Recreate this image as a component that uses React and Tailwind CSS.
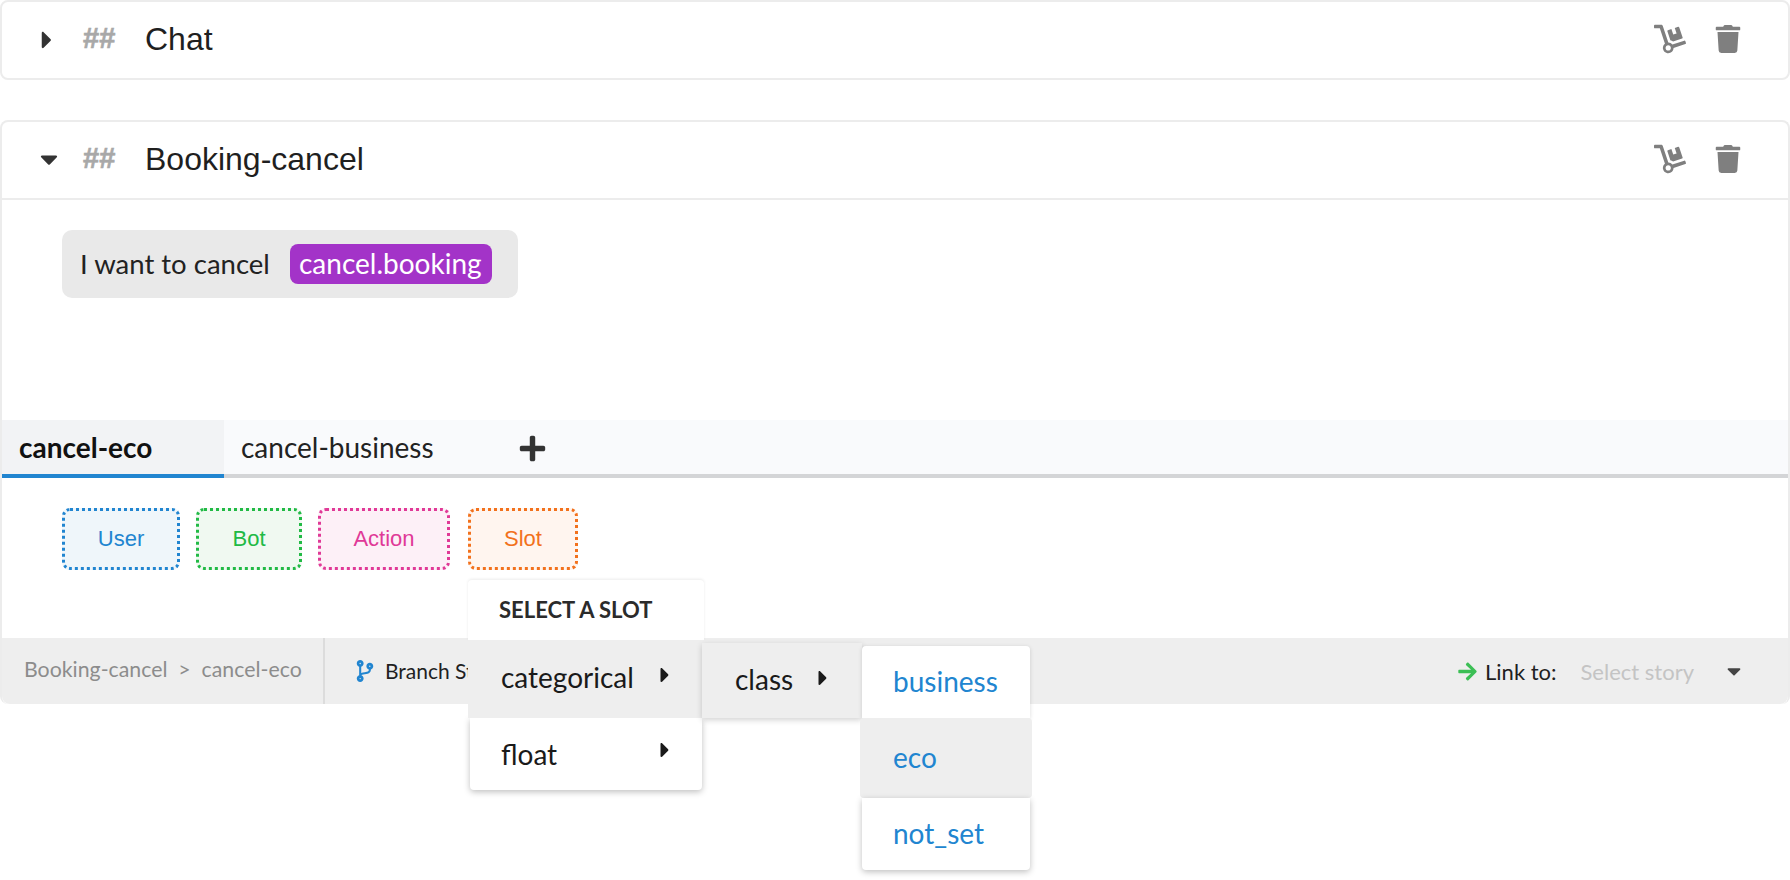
import { FaCaretDown, FaCaretRight, FaCodeBranch, FaDolly, FaTrash, FaPlus, FaArrowRight } from 'react-icons/fa'

function StoryHeader({ title, open, className = '' }) {
  return (
    <div className={`flex items-center h-[76px] pr-[46px] ${className}`}>
      <div className="w-[81px] pl-[31px] flex items-center">
        {open ? (
          <FaCaretDown size={28} className="ml-[2px] mb-[2px] text-[#333333]" />
        ) : (
          <FaCaretRight size={28} className="mb-[1px] text-[#333333]" />
        )}
      </div>
      <span className="w-[62px] pb-[2px] font-['Liberation_Sans'] font-bold text-[29px] text-[#a8a8a8] [-webkit-text-stroke:0.6px_#a8a8a8]">##</span>
      <span className="flex-1 pb-[2px] font-['Liberation_Sans'] text-[32px] text-[#1f1f1f]">{title}</span>
      <FaDolly size={32} className="text-[#7f7f7f] mr-[28px] mb-[2px]" />
      <FaTrash size={28} className="text-[#7f7f7f] mb-[3px]" />
    </div>
  )
}

function AddButton({ label, className }) {
  return (
    <div className={`h-[62px] pb-[2px] flex items-center justify-center rounded-lg border-[3px] border-dotted font-['Liberation_Sans'] text-[22px] ${className}`}>
      {label}
    </div>
  )
}

function SlotMenu() {
  return (
    <div className="absolute left-0 top-[72px] w-[236px] z-10 font-['Lato'] text-[28px] text-[#1a1a1a]">
      <div className="h-[60px] bg-white rounded-t pl-[31px] pt-[13px] font-bold text-[22px] text-[#2b2b2b] shadow-[0_-1px_3px_rgba(0,0,0,0.08)]">SELECT A SLOT</div>
      <div className="relative h-[78px] bg-[#eeeeee] flex items-center pl-[33px]">
        <span className="w-[152px] pb-[4px]">categorical</span>
        <FaCaretRight size={24} className="mb-[8px] text-[#1a1a1a]" />
        <div className="absolute left-[234px] top-[3px] w-[160px] h-[75px] bg-[#eeeeee] flex items-center pl-[33px] shadow-[0_2px_6px_rgba(0,0,0,0.18)]">
          <span className="w-[76px] pb-[4px]">class</span>
          <FaCaretRight size={24} className="mb-[6px] text-[#1a1a1a]" />
        </div>
        <div className="absolute left-[392px] top-[6px] w-[172px] text-[#2185d0]">
          <div className="h-[72px] pb-[2px] mx-[2px] bg-white rounded-t flex items-center pl-[31px] shadow-[0_1px_4px_rgba(0,0,0,0.15)]">business</div>
          <div className="h-[80px] pb-[2px] bg-[#eeeeee] rounded flex items-center pl-[33px]">eco</div>
          <div className="h-[72px] pb-[2px] mx-[2px] bg-white rounded-b flex items-center pl-[31px] shadow-[0_2px_6px_rgba(0,0,0,0.25)]">not_set</div>
        </div>
      </div>
      <div className="h-[72px] mx-[2px] bg-white rounded-b flex items-center pl-[31px] shadow-[0_2px_6px_rgba(0,0,0,0.25)]">
        <span className="w-[152px]">float</span>
        <FaCaretRight size={24} className="mb-[8px] text-[#1a1a1a]" />
      </div>
    </div>
  )
}

export default function App() {
  return (
    <div className="min-h-[880px] bg-white font-['Lato']">
      <div className="h-[80px] border-2 border-[#ececec] rounded-lg">
        <StoryHeader title="Chat" />
      </div>
      <div className="mt-[40px] h-[584px] border-2 border-b-0 border-[#ececec] rounded-lg flex flex-col">
        <StoryHeader title="Booking-cancel" open className="h-[78px] border-b-2 border-[#ececec]" />
        <div className="h-[220px] pt-[30px] pl-[60px]">
          <div className="w-[456px] h-[68px] bg-[#e9e9e9] rounded-[10px] flex items-center pl-[18px] text-[27.5px] text-[#222222]">
            <span className="w-[210px] pb-[1px]">I want to cancel</span>
            <span className="h-[40px] pl-[9px] pr-[10px] pb-[2px] bg-[#a333c8] rounded-lg text-[28px] text-white flex items-center">cancel.booking</span>
          </div>
        </div>
        <div className="h-[58px] bg-[#f9fafc] border-b-4 border-[#d4d5d7] flex text-[28px]">
          <div className="w-[222px] h-[58px] bg-[#f2f3f5] border-b-4 border-[#2185d0] pl-[17px] pt-[6px] font-bold text-[#111111]">cancel-eco</div>
          <div className="w-[294px] pl-[17px] pt-[6px] text-[#222222]">cancel-business</div>
          <FaPlus size={29} className="mt-[14px] text-[#333333]" />
        </div>
        <div className="h-[160px] pt-[30px] pl-[60px] flex gap-[16px] items-start">
          <AddButton label="User" className="w-[118px] border-[#2185d0] bg-[#eff6fa] text-[#2185d0]" />
          <AddButton label="Bot" className="w-[106px] border-[#21ba45] bg-[#f0f9f1] text-[#21ba45]" />
          <AddButton label="Action" className="w-[132px] border-[#e03997] bg-[#fdf0f7] text-[#e03997]" />
          <div className="relative w-[110px] ml-[2px]">
            <AddButton label="Slot" className="w-[110px] border-[#f2711c] bg-[#fff5ef] text-[#f2711c]" />
            <SlotMenu />
          </div>
        </div>
        <div className="flex-1 bg-[#eeeeee] rounded-b-lg flex items-center text-[21px]">
          <div className="w-[323px] h-full pl-[22px] pb-[2px] flex items-center border-r-2 border-[#dcdcdc] text-[21.3px] text-[#8c8c8c]">Booking-cancel&nbsp;&nbsp;&gt;&nbsp;&nbsp;cancel-eco</div>
          <FaCodeBranch size={22} className="ml-[29px] text-[#2185d0]" />
          <span className="ml-[9px] text-[#1f1f1f]">Branch Story</span>
          <div className="flex-1" />
          <FaArrowRight size={21} className="text-[#3cbf55]" />
          <span className="ml-[7px] text-[22px] text-[#1f1f1f]">Link to:</span>
          <span className="ml-[24px] text-[22px] text-[#c4c4c4]">Select story</span>
          <FaCaretDown size={22} className="ml-[29px] mr-[43px] text-[#444444]" />
        </div>
      </div>
    </div>
  )
}
